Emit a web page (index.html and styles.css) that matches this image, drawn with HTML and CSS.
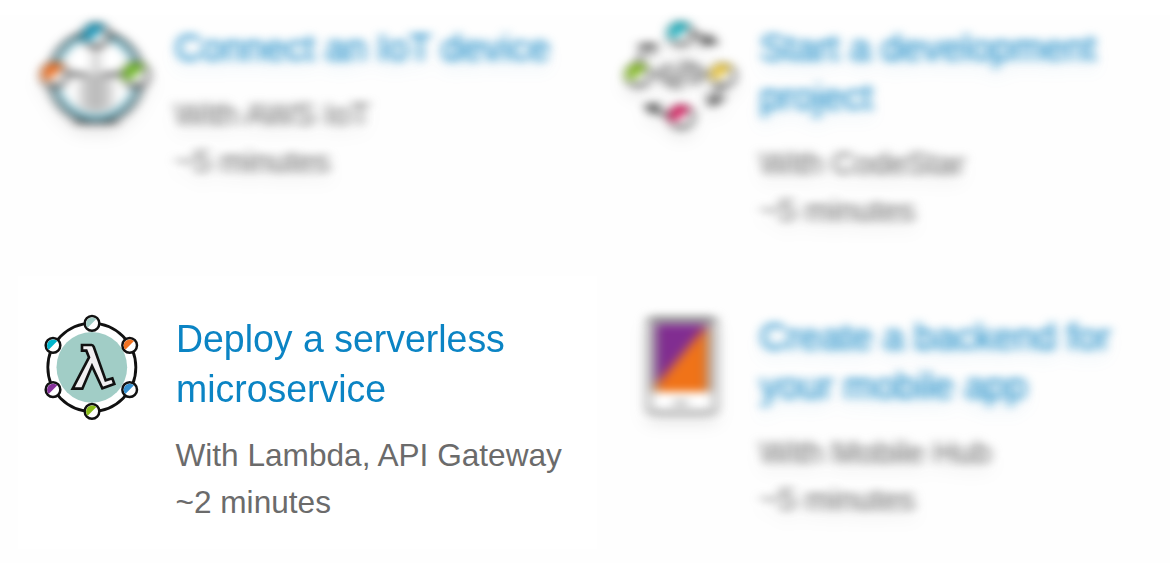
FILE: index.html
```html
<!DOCTYPE html>
<html lang="en">
<head>
<meta charset="utf-8">
<title>Build a solution</title>
<link rel="stylesheet" href="styles.css">
</head>
<body>
<svg class="defs" width="0" height="0" aria-hidden="true">
  <filter id="soften-text" x="-10%" y="-30%" width="120%" height="170%" color-interpolation-filters="sRGB">
    <feGaussianBlur stdDeviation="5.600 4"/>
  </filter>
  <filter id="soften-icon" x="-20%" y="-20%" width="140%" height="140%" color-interpolation-filters="sRGB">
    <feGaussianBlur stdDeviation="5.600 4.200"/>
  </filter>
</svg>
<main class="solutions">
  <article class="card muted">
    <div class="icon-box"><svg class="icon" viewBox="0 0 450 450">
      <circle cx="228" cy="230" r="126" fill="#fff" stroke="#71b5c6" stroke-width="24"/>
      <circle cx="228" cy="230" r="137" fill="none" stroke="#222" stroke-width="8"/>
      <path d="M165 367h126" stroke="#444" stroke-width="10"/>
      <path d="M176 225h104v108q-52 20-104 0z" fill="#e4e4e4"/>
      <path d="M190 225v100M209 225v105M247 225v105M266 225v100" stroke="#999" stroke-width="7"/>
      <path d="M228 145v190" stroke="#777" stroke-width="9"/>
      <path d="M135 222h65M250 222h65" stroke="#222" stroke-width="9"/>
      <g stroke="#222" stroke-width="9" fill="#fff"><circle cx="228" cy="106" r="36"/><circle cx="104" cy="224" r="36"/><circle cx="347" cy="224" r="36"/></g>
      <path d="M202 132A36 36 0 0 1 254 80z" fill="#1495b9"/>
      <path d="M78 250A36 36 0 0 1 130 198z" fill="#ed6c1c"/>
      <path d="M321 250A36 36 0 0 1 373 198z" fill="#69b51c"/>
    </svg></div>
    <div class="copy">
      <h2 class="title">Connect an IoT device</h2>
      <p class="meta">With AWS IoT<br>~5 minutes</p>
    </div>
  </article>
  <article class="card muted">
    <div class="icon-box"><svg class="icon" viewBox="-15 0 450 450">
      <g fill="none" stroke="#222" stroke-width="9">
        <path d="M250 98l48 28M270 132l45-4-24-28M82 194l24-55M86 136l48-2-8 32M330 255l-18 56M340 292l-36 24-8-34M180 352l-58-33M150 312l-38 6 22 26"/>
        <path d="M180 188l-40 34 40 34M248 188l40 34-40 34M224 178l-38 90" stroke-width="7"/>
        <path d="M192 202l-24 20 24 20M236 202l24 20-24 20M244 182l-38 90" stroke-width="5"/>
      </g>
      <g fill="#fff" stroke="#222" stroke-width="8"><circle cx="212" cy="100" r="34"/><circle cx="85" cy="224" r="34"/><circle cx="338" cy="224" r="34"/><circle cx="214" cy="349" r="34"/></g>
      <path d="M186 124A34 34 0 0 1 238 76z" fill="#15aebd"/>
      <path d="M59 248A34 34 0 0 1 111 200z" fill="#80b81c"/>
      <path d="M312 248A34 34 0 0 1 364 200z" fill="#eac63f"/>
      <path d="M188 373A34 34 0 0 1 240 325z" fill="#d61b5d"/>
    </svg></div>
    <div class="copy">
      <h2 class="title">Start a development<br>project</h2>
      <p class="meta">With CodeStar<br>~5 minutes</p>
    </div>
  </article>
  <article class="card active">
    <div class="icon-box"><svg class="icon" viewBox="-30 -33 450 450">
      <circle cx="185.500" cy="202" r="106" fill="#a1cdc6"/>
      <circle cx="185.500" cy="202" r="132" fill="none" stroke="#111" stroke-width="8.500"/>
      <path d="M156 135h29q4 0 6 5l36 101 20-6 6 17-36 13-31-67-29 68h-29l49-94-8-20h-13z" fill="#f1eff1" stroke="#111" stroke-width="8" stroke-linejoin="miter"/>
      <g fill="#fff" stroke="#111" stroke-width="7.500"><circle cx="186" cy="70" r="22"/><circle cx="69" cy="136" r="22"/><circle cx="299" cy="136" r="22"/><circle cx="69" cy="269" r="22"/><circle cx="299" cy="269" r="22"/><circle cx="186" cy="334" r="22"/></g>
      <path d="M173 83A18.400 18.400 0 0 1 199 57z" fill="#a1cdc6"/>
      <path d="M56 149A18.400 18.400 0 0 1 82 123z" fill="#00b5cc"/>
      <path d="M286 149A18.400 18.400 0 0 1 312 123z" fill="#f27221"/>
      <path d="M56 282A18.400 18.400 0 0 1 82 256z" fill="#85309a"/>
      <path d="M286 282A18.400 18.400 0 0 1 312 256z" fill="#3590cf"/>
      <path d="M173 347A18.400 18.400 0 0 1 199 321z" fill="#8abd18"/>
    </svg></div>
    <div class="copy">
      <h2 class="title">Deploy a serverless<br>microservice</h2>
      <p class="meta">With Lambda, API Gateway<br>~2 minutes</p>
    </div>
  </article>
  <article class="card muted">
    <div class="icon-box"><svg class="icon" viewBox="-45 -3 450 450">
      <rect x="88" y="84" width="196" height="282" rx="8" fill="#fff" stroke="#999" stroke-width="12"/>
      <path d="M88 91h196" stroke="#888" stroke-width="16"/>
      <path d="M106 102h158L106 290z" fill="#812d91"/>
      <path d="M264 102v203H106v-15z" fill="#f07318"/>
      <path d="M106 102v203M264 102v203" stroke="#444" stroke-width="6"/>
      <path d="M164 338h36" stroke="#777" stroke-width="10"/>
    </svg></div>
    <div class="copy">
      <h2 class="title">Create a backend for<br>your mobile app</h2>
      <p class="meta">With Mobile Hub<br>~5 minutes</p>
    </div>
  </article>
</main>
</body>
</html>
```
FILE: styles.css
```css
body {
  margin: 0;
  background: #fff;
  font-family: "Liberation Sans", Arial, sans-serif;
}

.defs {
  position: absolute;
}

.solutions {
  display: grid;
  grid-template-columns: 585px 585px;
  grid-template-rows: 289px 274px;
  height: 563px;
  overflow: hidden;
  background: linear-gradient(#fff 15px, #fefefe 15px);
}

.card {
  display: flex;
  padding-left: 20px;
}

.active {
  margin: -13px -12px 14px 18px;
  padding: 13px 0 0 2px;
  background: #fff;
}

.icon-box {
  flex: none;
  width: 150px;
  height: 150px;
}

.icon {
  display: block;
  width: 150px;
  height: 150px;
}

.copy {
  flex: 1;
  padding: 23px 0 0 5px;
  white-space: nowrap;
}

.active .copy {
  padding: 25px 0 0 5.5px;
}

.title {
  margin: 0;
  font-size: 39.5px;
  font-weight: 400;
  line-height: 49px;
  color: #0b84c4;
  transform: scaleX(0.95);
  transform-origin: left;
}

.active .title {
  line-height: 49.5px;
  transform: scaleX(0.948);
}

.meta {
  margin: 19px 0 0;
  font-size: 31.5px;
  line-height: 47px;
  color: #6b6b6b;
}

.active .meta {
  margin-top: 19px;
  font-size: 31.6px;
}

.muted .icon-box {
  filter: url(#soften-icon) drop-shadow(0 9px 7px rgba(0, 0, 0, 0.1));
}

.muted .title {
  filter: url(#soften-text) drop-shadow(0 9px 7px rgba(11, 132, 196, 0.12));
}

.muted .meta {
  filter: url(#soften-text) drop-shadow(0 9px 7px rgba(0, 0, 0, 0.1));
}
```
